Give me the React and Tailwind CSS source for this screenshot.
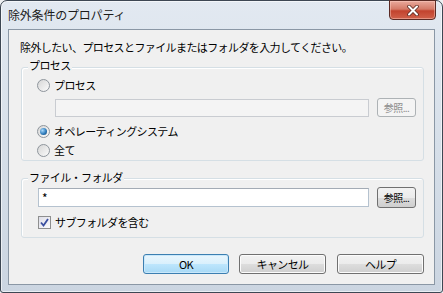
import React from 'react';

// Win7 style radio button
const Radio = ({ checked, label }) => (
  <div className="flex items-center h-[16px]">
    <span className="w-[13px] h-[13px] rounded-full border border-[#8e959c] bg-gradient-to-br from-[#d6d6d6] to-[#fbfbfb] flex items-center justify-center shrink-0">
      {checked && (
        <span className="w-[7px] h-[7px] rounded-full bg-[radial-gradient(circle_at_35%_35%,#a8d8fb_0%,#2f7dbd_55%,#0d3b69_100%)]" />
      )}
    </span>
    <span className="ml-[4px]">{label}</span>
  </div>
);

const Checkbox = ({ label }) => (
  <div className="flex items-center h-[16px]">
    <span className="w-[13px] h-[13px] border border-[#8e8f8f] bg-gradient-to-br from-[#dedee8] to-[#fbfbfd] flex items-center justify-center shrink-0">
      <svg width="9" height="9" viewBox="0 0 9 9">
        <path d="M1 4.5 L3.5 7.5 L8 1" fill="none" stroke="#3a4fa0" strokeWidth="1.8" />
      </svg>
    </span>
    <span className="ml-[4px]">{label}</span>
  </div>
);

const Group = ({ label, labelTop, className, children }) => (
  <div className={`relative border border-[#d5dfe5] rounded-[3px] shadow-[inset_1px_1px_0_#ffffff] ${className}`}>
    <span className={`absolute left-[6px] px-[1px] bg-[#f0f0f0] leading-[16px] ${labelTop}`}>{label}</span>
    {children}
  </div>
);

const Browse = ({ disabled, className }) => (
  <button
    className={`w-[39px] rounded-[3px] border text-[10px] leading-none flex items-center justify-center ${
      disabled
        ? 'border-[#adb2b5] bg-[#f4f4f4] text-[#8b8b8b]'
        : 'border-[#707070] bg-[linear-gradient(#f2f2f2_0%,#ebebeb_50%,#dddddd_50%,#cfcfcf_100%)] text-black'
    } ${className}`}
  >
    参照...
  </button>
);

const DlgButton = ({ children, isDefault, className }) => (
  <button
    className={`h-[20px] rounded-[3px] border flex items-center justify-center ${
      isDefault
        ? 'border-[#3c7fb1] bg-[linear-gradient(#eaf6fd_0%,#d9f0fc_50%,#bee6fd_50%,#a7d9f5_100%)] shadow-[inset_0_0_0_1px_#c9e8fb]'
        : 'border-[#707070] bg-[linear-gradient(#f2f2f2_0%,#ebebeb_50%,#dddddd_50%,#cfcfcf_100%)] shadow-[inset_0_0_0_1px_#fcfcfc]'
    } ${className}`}
  >
    {children}
  </button>
);

export default function App() {
  return (
    <div className="w-[443px] h-[293px] bg-[#eef0f2] font-['Meiryo_UI','Noto_Sans_CJK_JP',sans-serif] text-[11px] tracking-[-0.6px] text-black">
      <div className="w-full h-full flex flex-col rounded-t-[7px] rounded-b-[3px] border border-[#3d4753] bg-gradient-to-b from-[#e2e9f1] via-[#d6dfe9] to-[#cbd5e1] shadow-[inset_0_0_0_1px_rgba(255,255,255,0.6)]">
        {/* TITLE BAR */}
        <div className="h-[28px] flex items-start justify-between shrink-0">
          <span className="pl-[7px] h-[28px] flex items-center text-[12px] tracking-[-0.2px] text-[#1b1b1b]">除外条件のプロパティ</span>
          <div className="-mt-[1px] mr-[6px] w-[47px] h-[20px] rounded-b-[4px] border border-[#5a2a24] bg-[linear-gradient(#e9a99c_0%,#d47a68_45%,#c2432e_55%,#d0614a_100%)] shadow-[inset_0_0_0_1px_rgba(255,210,200,0.45)] flex items-center justify-center">
            <svg width="14" height="11" viewBox="0 0 14 11">
              <path d="M3 1.5 L11 9.5 M11 1.5 L3 9.5" stroke="#5b2a22" strokeWidth="3.6" strokeLinecap="round" />
              <path d="M3 1.5 L11 9.5 M11 1.5 L3 9.5" stroke="#ffffff" strokeWidth="2" strokeLinecap="round" />
            </svg>
          </div>
        </div>

        {/* CLIENT AREA */}
        <div className="flex-1 mx-[7px] mb-[7px] border border-[#8a97a5] bg-[#f0f0f0] flex flex-col">
          <p className="ml-[11px] mt-[9px] leading-[16px]">除外したい、プロセスとファイルまたはフォルダを入力してください。</p>

          <Group label="プロセス" labelTop="top-[-11px]" className="mt-[12px] ml-[12px] mr-[10px] h-[94px]">
            <div className="pt-[9px] pl-[15px] flex flex-col">
              <Radio label="プロセス" />
              <div className="mt-[5px] ml-[18px] flex items-start">
                <div className="mt-[1px] w-[314px] h-[18px] border border-[#c9ccd1] bg-[#f4f4f4]" />
                <Browse disabled className="ml-[8px] h-[19px]" />
              </div>
              <div className="mt-[6px]">
                <Radio checked label="オペレーティングシステム" />
              </div>
              <div className="mt-[3px]">
                <Radio label="全て" />
              </div>
            </div>
          </Group>

          <Group label="ファイル・フォルダ" labelTop="top-[-10px]" className="mt-[17px] ml-[12px] mr-[10px] h-[60px]">
            <div className="pt-[8px] pl-[16px] flex flex-col">
              <div className="flex items-start">
                <div className="mt-[1px] w-[331px] h-[19px] border border-[#b5c2cf] border-t-[#a3abb5] bg-white pl-[3px] leading-[17px] text-[12px]">*</div>
                <Browse className="ml-[8px] h-[21px]" />
              </div>
              <div className="mt-[6px]">
                <Checkbox label="サブフォルダを含む" />
              </div>
            </div>
          </Group>

          <div className="mt-[16px] mr-[10px] flex justify-end">
            <DlgButton isDefault className="w-[86px]">OK</DlgButton>
            <DlgButton className="ml-[10px] w-[87px]">キャンセル</DlgButton>
            <DlgButton className="ml-[11px] w-[87px]">ヘルプ</DlgButton>
          </div>
        </div>
      </div>
    </div>
  );
}
